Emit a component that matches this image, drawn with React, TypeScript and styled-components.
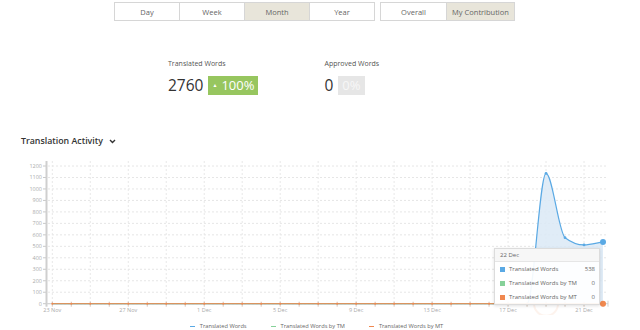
import styled, { createGlobalStyle } from "styled-components";

const GlobalStyle = createGlobalStyle`
  body {
    margin: 0;
    background: #fff;
    font-family: "Open Sans", "Liberation Sans", sans-serif;
    color: #444;
  }
`;

const Page = styled.div`
  width: 640px;
  height: 330px;
  overflow: hidden;
  position: relative;
`;

const Toolbar = styled.div`
  display: flex;
  gap: 5px;
  padding: 2px 0 0 114px;
`;

const Group = styled.div`
  display: flex;
  border: 1px solid #d6d6d6;
`;

const ToggleButton = styled.button<{ $active?: boolean; $width: number }>`
  width: ${({ $width }) => $width}px;
  height: 17px;
  padding: 0;
  border: none;
  border-left: 1px solid #d6d6d6;
  background: ${({ $active }) => ($active ? "#e8e5da" : "#fff")};
  color: #666;
  font-family: inherit;
  font-size: 7.5px;
  cursor: pointer;

  &:first-child {
    border-left: none;
  }
`;

const Stats = styled.div`
  display: flex;
  gap: 66px;
  padding: 38px 0 0 168px;
`;

const Stat = styled.div`
  display: flex;
  flex-direction: column;
  gap: 6px;
`;

const StatLabel = styled.span`
  font-size: 7px;
  line-height: 10px;
  color: #555;
`;

const StatValueRow = styled.div`
  display: flex;
  align-items: center;
  gap: 5px;
  height: 20px;
`;

const StatValue = styled.span`
  font-size: 15.5px;
  line-height: 20px;
  color: #333;
`;

const Badge = styled.span<{ $tone: "up" | "flat" }>`
  display: inline-flex;
  align-items: center;
  gap: 4px;
  height: 19px;
  padding: 0 4px;
  background: ${({ $tone }) => ($tone === "up" ? "#97c65f" : "#e6e6e6")};
  color: ${({ $tone }) => ($tone === "up" ? "#fff" : "#f7f7f7")};
  font-size: 13px;
`;

const Caret = styled.span`
  font-size: 5px;
`;

const Title = styled.h2`
  display: flex;
  align-items: center;
  gap: 6px;
  height: 14px;
  margin: 39px 0 0 21px;
  font-size: 8.8px;
  line-height: 14px;
  font-weight: 600;
  color: #333;
`;

const ChartWrap = styled.div`
  position: relative;
  height: 160px;
  margin-top: 7px;
`;

const Tooltip = styled.div`
  position: absolute;
  left: 494px;
  top: 93px;
  width: 104px;
  background: rgba(255, 255, 255, 0.92);
  border: 1px solid #dcdcdc;
  box-shadow: 0 1px 3px rgba(0, 0, 0, 0.12);
  font-size: 6px;
  color: #666;
`;

const TooltipHead = styled.div`
  padding: 2px 5px;
  line-height: 8px;
  border-bottom: 1px solid #e6e6e6;
  background: #f7f7f7;
`;

const TooltipRow = styled.div`
  display: flex;
  align-items: center;
  gap: 4px;
  height: 14px;
  padding: 0 4px 0 5px;
`;

const Swatch = styled.span<{ $color: string }>`
  width: 5px;
  height: 5px;
  background: ${({ $color }) => $color};
`;

const RowLabel = styled.span`
  flex: 1;
`;

const Legend = styled.div`
  display: flex;
  justify-content: center;
  gap: 24px;
  padding: 7px 0 0 0;
  margin-left: -7px;
  font-size: 5.7px;
  line-height: 8px;
  color: #666;
`;

const LegendItem = styled.span<{ $color: string }>`
  display: flex;
  align-items: center;
  gap: 5px;

  &::before {
    content: "";
    width: 5px;
    height: 1px;
    background: ${({ $color }) => $color};
  }
`;

const BLUE = "#5aa9e4";
const GREEN = "#86d199";
const ORANGE = "#f0884f";

const TOP = 155;
const X0 = 52.3;
const DX = 18.99;
const Y0 = 303.7 - TOP;
const SY = 0.11475;

const days = Array.from({ length: 30 }, (_, i) => i);
const words = days.map((i) => (i === 26 ? 1135 : i === 27 ? 575 : i === 28 ? 512 : i === 29 ? 538 : 0));

const xs = (i: number) => X0 + i * DX;
const ys = (v: number) => Y0 - v * SY;

function monotonePath(vals: number[]) {
  const n = vals.length;
  const px = vals.map((_, i) => xs(i));
  const py = vals.map((v) => ys(v));
  const s: number[] = [];
  for (let i = 0; i < n - 1; i++) s.push((py[i + 1] - py[i]) / (px[i + 1] - px[i]));
  const t: number[] = [];
  for (let i = 0; i < n; i++) {
    if (i === 0) t.push(s[0]);
    else if (i === n - 1) t.push(s[n - 2]);
    else if (s[i - 1] * s[i] <= 0) t.push(0);
    else {
      const p = (s[i - 1] + s[i]) / 2;
      t.push((Math.sign(s[i - 1]) + Math.sign(s[i])) * Math.min(Math.abs(s[i - 1]), Math.abs(s[i]), 0.5 * Math.abs(p)) || 0);
    }
  }
  let d = `M${px[0]},${py[0]}`;
  for (let i = 0; i < n - 1; i++) {
    const h = (px[i + 1] - px[i]) / 3;
    d += ` C${px[i] + h},${py[i] + h * t[i]} ${px[i + 1] - h},${py[i + 1] - h * t[i + 1]} ${px[i + 1]},${py[i + 1]}`;
  }
  return d;
}

const yTicks = Array.from({ length: 13 }, (_, i) => i * 100);
const dateLabels = ["23 Nov", "27 Nov", "1 Dec", "5 Dec", "9 Dec", "13 Dec", "17 Dec", "21 Dec"];

function Chart() {
  const line = monotonePath(words);
  const area = `${line} L${xs(29)},${Y0} L${xs(0)},${Y0} Z`;
  const flat = `M${xs(0)},${Y0} L${xs(29)},${Y0}`;
  return (
    <svg width="640" height="160" style={{ display: "block" }}>
      {yTicks.map((v) => (
        <g key={v}>
          <line x1={48} x2={608} y1={ys(v)} y2={ys(v)} stroke="#e6e6e6" strokeWidth={1} strokeDasharray="2 2" />
          <line x1={43} x2={46} y1={ys(v)} y2={ys(v)} stroke="#c8c8c8" />
          <text x={42} y={ys(v) + 2} fontSize={5.5} fill="#aaa" textAnchor="end">
            {v}
          </text>
        </g>
      ))}
      {days
        .filter((i) => i % 2 === 0)
        .map((i) => (
          <line key={i} x1={xs(i)} x2={xs(i)} y1={6} y2={Y0} stroke="#e8e8e8" strokeDasharray="2 2" />
        ))}
      <line x1={46.5} x2={46.5} y1={6} y2={Y0 + 3} stroke="#cfcfcf" strokeWidth={2} />
      <line x1={47} x2={608} y1={Y0} y2={Y0} stroke="#cfcfcf" />
      <line x1={608} x2={608} y1={Y0 - 3} y2={Y0 + 3} stroke="#cfcfcf" />
      <path d={area} fill="#dbe9f6" opacity={0.85} />
      <path d={line} fill="none" stroke={BLUE} strokeWidth={1.2} />
      <path d={flat} fill="none" stroke={GREEN} strokeWidth={1} />
      <path d={flat} fill="none" stroke={ORANGE} strokeWidth={1} />
      {days.map((i) => (
        <g key={i}>
          <line x1={xs(i)} x2={xs(i)} y1={Y0 - 2} y2={Y0 + 3} stroke="#c9b7a8" strokeWidth={0.8} />
          <circle cx={xs(i)} cy={Y0} r={1} fill={ORANGE} />
        </g>
      ))}
      {[26, 27, 28].map((i) => (
        <circle key={i} cx={xs(i)} cy={ys(words[i])} r={1.4} fill={BLUE} />
      ))}
      <circle cx={xs(26)} cy={Y0} r={12} fill="none" stroke={ORANGE} strokeOpacity={0.1} strokeWidth={2} />
      <circle cx={xs(29)} cy={ys(538)} r={3} fill={BLUE} />
      <circle cx={xs(29)} cy={Y0} r={3} fill={ORANGE} />
      {dateLabels.map((label, k) => (
        <text key={label} x={xs(k * 4)} y={Y0 + 8} fontSize={5.5} fill="#aaa" textAnchor="middle">
          {label}
        </text>
      ))}
    </svg>
  );
}

export default function App() {
  return (
    <Page>
      <GlobalStyle />
      <Toolbar>
        <Group>
          <ToggleButton $width={64}>Day</ToggleButton>
          <ToggleButton $width={65}>Week</ToggleButton>
          <ToggleButton $width={65} $active>
            Month
          </ToggleButton>
          <ToggleButton $width={65}>Year</ToggleButton>
        </Group>
        <Group>
          <ToggleButton $width={65}>Overall</ToggleButton>
          <ToggleButton $width={68} $active>
            My Contribution
          </ToggleButton>
        </Group>
      </Toolbar>

      <Stats>
        <Stat>
          <StatLabel>Translated Words</StatLabel>
          <StatValueRow>
            <StatValue>2760</StatValue>
            <Badge $tone="up">
              <Caret>▲</Caret>100%
            </Badge>
          </StatValueRow>
        </Stat>
        <Stat>
          <StatLabel>Approved Words</StatLabel>
          <StatValueRow>
            <StatValue>0</StatValue>
            <Badge $tone="flat">0%</Badge>
          </StatValueRow>
        </Stat>
      </Stats>

      <Title>
        Translation Activity
        <svg width="7" height="5" viewBox="0 0 7 5">
          <path d="M1 1 L3.5 3.5 L6 1" fill="none" stroke="#333" strokeWidth={1.4} />
        </svg>
      </Title>

      <ChartWrap>
        <Chart />
        <Tooltip>
          <TooltipHead>22 Dec</TooltipHead>
          <TooltipRow>
            <Swatch $color={BLUE} />
            <RowLabel>Translated Words</RowLabel>
            538
          </TooltipRow>
          <TooltipRow>
            <Swatch $color={GREEN} />
            <RowLabel>Translated Words by TM</RowLabel>0
          </TooltipRow>
          <TooltipRow>
            <Swatch $color={ORANGE} />
            <RowLabel>Translated Words by MT</RowLabel>0
          </TooltipRow>
        </Tooltip>
      </ChartWrap>

      <Legend>
        <LegendItem $color={BLUE}>Translated Words</LegendItem>
        <LegendItem $color={GREEN}>Translated Words by TM</LegendItem>
        <LegendItem $color={ORANGE}>Translated Words by MT</LegendItem>
      </Legend>
    </Page>
  );
}
